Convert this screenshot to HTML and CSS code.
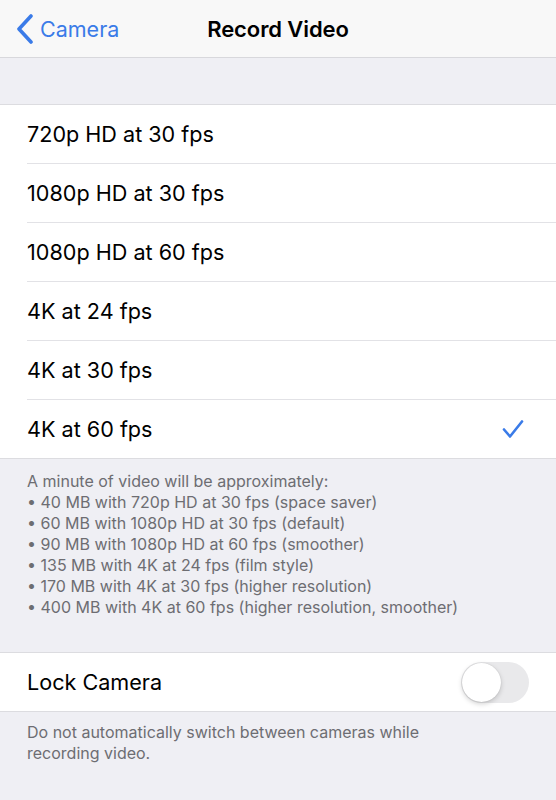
FILE: index.html
```html
<!DOCTYPE html>
<html lang="en">
<head>
    <meta charset="UTF-8">
    <meta name="viewport" content="width=device-width, initial-scale=1.0">
    <title>Record Video</title>
    <link rel="stylesheet" href="styles.css">
</head>
<body>
    <header class="navbar">
        <a class="back" href="#">
            <svg class="chevron" width="18" height="30" viewBox="0 0 18 30">
                <path d="M15 2 L3 15 L15 28" fill="none" stroke="currentColor" stroke-width="3.6" stroke-linecap="round" stroke-linejoin="round"/>
            </svg>
            <span>Camera</span>
        </a>
        <h1>Record Video</h1>
    </header>

    <div class="spacer"></div>

    <ul class="group">
        <li class="row"><span>720p HD at 30 fps</span></li>
        <li class="row"><span>1080p HD at 30 fps</span></li>
        <li class="row"><span>1080p HD at 60 fps</span></li>
        <li class="row"><span>4K at 24 fps</span></li>
        <li class="row"><span>4K at 30 fps</span></li>
        <li class="row selected">
            <span>4K at 60 fps</span>
            <svg class="check" width="22" height="20" viewBox="0 0 22 20">
                <path d="M2 10.5 L8 17.5 L20 2.5" fill="none" stroke="currentColor" stroke-width="2.6" stroke-linecap="round" stroke-linejoin="round"/>
            </svg>
        </li>
    </ul>
    <div class="footnote">
        A minute of video will be approximately:<br>
        • 40 MB with 720p HD at 30 fps (space saver)<br>
        • 60 MB with 1080p HD at 30 fps (default)<br>
        • 90 MB with 1080p HD at 60 fps (smoother)<br>
        • 135 MB with 4K at 24 fps (film style)<br>
        • 170 MB with 4K at 30 fps (higher resolution)<br>
        • 400 MB with 4K at 60 fps (higher resolution, smoother)
    </div>

    <ul class="group">
        <li class="row">
            <span>Lock Camera</span>
            <span class="toggle"><span class="knob"></span></span>
        </li>
    </ul>
    <div class="footnote short">
        Do not automatically switch between cameras while<br>
        recording video.
    </div>
</body>
</html>
```

FILE: styles.css
```css
html, body {
    margin: 0;
    padding: 0;
    background-color: #efeff4;
    color: #000000;
    font-family: 'Inter', 'Liberation Sans', sans-serif;
}
.navbar {
    height: 57px;
    background-color: #f8f8f8;
    border-bottom: 1px solid #d8d8dc;
    display: flex;
    align-items: center;
    justify-content: center;
    position: relative;
}
.navbar h1 {
    margin: 0;
    font-size: 22px;
    font-weight: 600;
    letter-spacing: -0.1px;
}
.back {
    position: absolute;
    left: 16px;
    top: 0;
    height: 57px;
    display: flex;
    align-items: center;
    gap: 6px;
    color: #3a7be8;
    text-decoration: none;
    font-size: 21.5px;
}
.spacer {
    height: 46px;
}
.group {
    list-style: none;
    margin: 0;
    padding: 0 0 0 27px;
    background-color: #ffffff;
    border-top: 1px solid #dcdce0;
    border-bottom: 1px solid #dcdce0;
}
.row {
    height: 58px;
    display: flex;
    align-items: center;
    justify-content: space-between;
    padding-right: 27px;
    font-size: 21.6px;
    border-bottom: 1px solid #e2e2e6;
}
.row:last-child {
    border-bottom: none;
}
.check {
    color: #3a7be8;
    margin-right: 5px;
}
.footnote {
    padding: 12px 27px 34px;
    font-size: 16px;
    line-height: 21px;
    color: #6d6d72;
}
.footnote.short {
    padding-top: 10px;
}
.toggle {
    width: 68px;
    height: 41px;
    border-radius: 21px;
    background-color: #e9e9eb;
    display: flex;
    align-items: center;
    box-sizing: border-box;
    padding: 1px;
}
.knob {
    width: 39px;
    height: 39px;
    border-radius: 50%;
    background-color: #ffffff;
    box-shadow: 0 2px 5px rgba(0, 0, 0, 0.18), 0 0 1px rgba(0, 0, 0, 0.2);
}
```
